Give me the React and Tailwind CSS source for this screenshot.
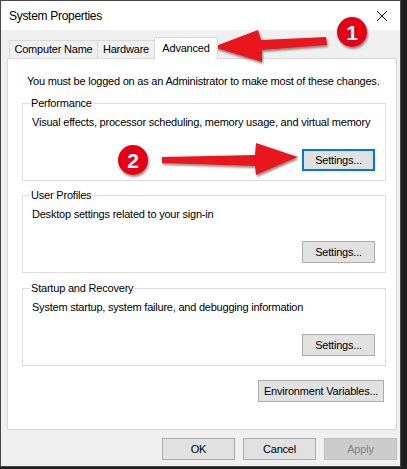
import React from "react";

const FONT = { fontFamily: '"Liberation Sans", Arial, sans-serif' };

function Btn({ children, w = "w-[73px]", focused = false, disabled = false }) {
  let cls =
    "h-[22px] flex items-center justify-center text-[11px] tracking-[-0.2px] leading-none shrink-0 whitespace-nowrap ";
  if (focused) cls += "border-2 border-[#0078d7] bg-[#e1e1e1] text-black ";
  else if (disabled) cls += "border border-[#bfbfbf] bg-[#cccccc] text-[#838383] ";
  else cls += "border border-[#adadad] bg-[#e1e1e1] text-black ";
  return <div className={cls + w}>{children}</div>;
}

function Group({ title, text, mt, focused }) {
  return (
    <div className={"relative border border-[#dcdcdc] h-[78px] pl-[9px] pr-[10px] pt-[11px] flex flex-col " + mt}>
      <span className="absolute left-[7px] -top-[8px] bg-white px-[1px] leading-[15px] text-[11px] tracking-[-0.2px] whitespace-nowrap">
        {title}
      </span>
      <div className="leading-[15px] text-[11px] tracking-[-0.22px] whitespace-nowrap">{text}</div>
      <div className="mt-auto mb-[9px] flex justify-end">
        <Btn focused={focused}>Settings...</Btn>
      </div>
    </div>
  );
}

export default function App() {
  return (
    <div className="w-[407px] h-[469px] bg-[#1e1e1e] overflow-hidden relative text-black" style={FONT}>
      <div className="w-[401px] h-[467px] border border-[#474747] bg-[#f0f0f0] flex flex-col">
        <div className="h-[29px] bg-white flex items-center justify-between pl-[8px] pr-[13px] shrink-0">
          <span className="text-[12px] tracking-[-0.3px] leading-none whitespace-nowrap">System Properties</span>
          <svg width="10" height="10" viewBox="0 0 10 10">
            <path d="M0 0L10 10M10 0L0 10" stroke="#000" strokeWidth="1" />
          </svg>
        </div>
        <div className="flex-1 pl-[6px] pr-[3px] pt-[7px] flex flex-col">
          <div className="h-[21px] flex items-end pl-[2px] text-[11px] tracking-[-0.2px] whitespace-nowrap">
            <div className="w-[89px] h-[18px] border border-b-0 border-[#d9d9d9] flex items-center justify-center">
              Computer Name
            </div>
            <div className="w-[58px] -ml-px h-[18px] border border-b-0 border-[#d9d9d9] flex items-center justify-center">
              Hardware
            </div>
            <div className="w-[64px] -ml-px h-[22px] -mb-px relative z-10 border border-b-0 border-[#d9d9d9] bg-white flex items-center justify-center pb-[1px]">
              Advanced
            </div>
          </div>
          <div className="h-[372px] bg-white border border-[#d9d9d9] pt-[15px] pl-[14px] pr-[10px] flex flex-col">
            <div className="pl-[5px] leading-[15px] text-[11px] tracking-[-0.22px] whitespace-nowrap">
              You must be logged on as an Administrator to make most of these changes.
            </div>
            <Group
              mt="mt-[14px]"
              title="Performance"
              text="Visual effects, processor scheduling, memory usage, and virtual memory"
              focused
            />
            <Group mt="mt-[14px]" title="User Profiles" text="Desktop settings related to your sign-in" />
            <Group
              mt="mt-[15px]"
              title="Startup and Recovery"
              text="System startup, system failure, and debugging information"
            />
            <div className="mt-[14px] flex justify-end pr-[2px]">
              <Btn w="w-[126px]">Environment Variables...</Btn>
            </div>
          </div>
          <div className="mt-[8px] flex justify-end gap-[8px]">
            <Btn>OK</Btn>
            <Btn>Cancel</Btn>
            <Btn disabled>Apply</Btn>
          </div>
        </div>
      </div>

      <svg className="absolute inset-0 pointer-events-none" width="407" height="469" viewBox="0 0 407 469">
        <defs>
          <filter id="sh" x="-20%" y="-20%" width="140%" height="160%">
            <feDropShadow dx="1" dy="2" stdDeviation="1.2" floodColor="#000" floodOpacity="0.45" />
          </filter>
        </defs>
        <g filter="url(#sh)">
          <polygon points="326,37 261,40 258,30 213,47 262,62 262,50 327,45" fill="#e9161e" />
          <polygon points="162,157 255,155 256,143 298,157 256,175 255,166 162,163" fill="#e9161e" />
          <circle cx="352" cy="32" r="15" fill="#e30613" />
          <circle cx="133" cy="160" r="15" fill="#e30613" />
        </g>
        <text x="352" y="39.5" textAnchor="middle" fill="#fff" fontSize="21" fontWeight="bold" fontFamily="Liberation Sans, Arial, sans-serif">1</text>
        <text x="133" y="167.5" textAnchor="middle" fill="#fff" fontSize="21" fontWeight="bold" fontFamily="Liberation Sans, Arial, sans-serif">2</text>
      </svg>
    </div>
  );
}
